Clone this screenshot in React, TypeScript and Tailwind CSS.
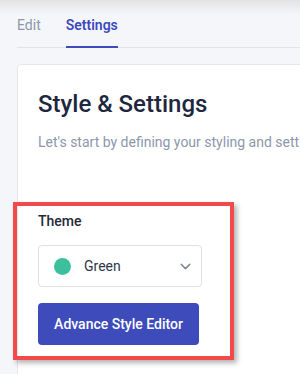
import { ChevronDown } from 'lucide-react'

export default function App() {
  return (
    <div className="relative w-[300px] h-[374px] overflow-hidden bg-[#f5f6fa] font-['Roboto',sans-serif]">
      {/* shadow from the header above */}
      <div className="absolute inset-x-0 top-0 h-[14px] bg-gradient-to-b from-[#e3e3e5] to-[#f5f6fa]" />

      <div className="relative pl-[17px]">
        <div className="flex w-[320px] h-[48px] gap-[25px] border-b border-[#e1e3e8]">
          <div className="pt-[15px] text-[14px] leading-5 text-[#8d97a9]">Edit</div>
          <div className="h-[48px] border-b-2 border-[#3d4bbd] pt-[15px] text-[14px] leading-5 font-semibold text-[#3d4bbd]">
            Settings
          </div>
        </div>

        <div className="mt-[16px] w-[320px] h-[320px] rounded-[4px] border border-[#e5e7eb] bg-white pl-[20px] pt-[23px]">
          <h1 className="text-[24px] leading-8 font-medium text-[#1e2740] whitespace-nowrap">Style &amp; Settings</h1>
          <p className="mt-[12px] text-[14px] leading-5 text-[#8c97ab] whitespace-nowrap">
            Let's start by defining your styling and settings for your form
          </p>

          <div className="mt-[59px]">
            <div className="text-[14px] leading-5 font-medium text-[#1f2937]">Theme</div>
            <div className="mt-[14px] flex w-[164px] h-[42px] items-center rounded-[4px] border border-[#dfe1e5] pl-[15px] pr-[7px]">
              <span className="w-[17px] h-[17px] rounded-full bg-[#3bbf9c]" />
              <span className="ml-[13px] flex-1 text-[14px] text-[#2f3648]">Green</span>
              <ChevronDown className="w-[17px] h-[17px] text-[#7c869a]" strokeWidth={2} />
            </div>
            <button className="mt-[16px] w-[161px] h-[42px] rounded-[4px] bg-[#3d4bbb] text-[14px] font-medium text-white">
              Advance Style Editor
            </button>
          </div>
        </div>
      </div>

      {/* annotation box */}
      <div className="absolute left-[13px] top-[202px] w-[221px] h-[158px] border-4 border-[#f24a4a] shadow-[3px_3px_5px_rgba(0,0,0,0.3)]" />
    </div>
  )
}
